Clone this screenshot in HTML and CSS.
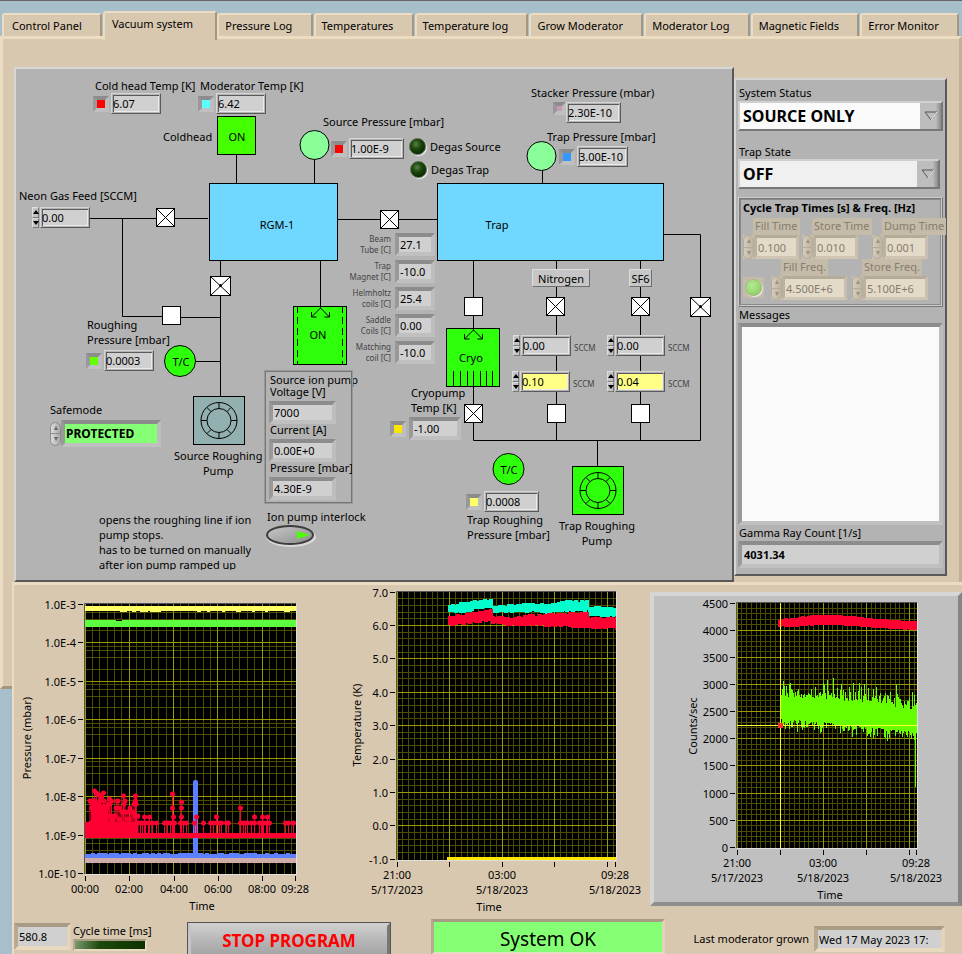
FILE: index.html
```html
<!DOCTYPE html>
<html lang="en">
<head>
  <meta charset="UTF-8" />
  <meta name="viewport" content="width=device-width, initial-scale=1.0"/>
  <title>Vacuum system</title>
  <link rel="stylesheet" href="styles.css">
</head>
<body>
  <nav class="tabs" role="tablist">
    <button type="button" role="tab" class="tab">Control Panel</button>
    <button type="button" role="tab" class="tab active" aria-selected="true">Vacuum system</button>
    <button type="button" role="tab" class="tab">Pressure Log</button>
    <button type="button" role="tab" class="tab">Temperatures</button>
    <button type="button" role="tab" class="tab">Temperature log</button>
    <button type="button" role="tab" class="tab">Grow Moderator</button>
    <button type="button" role="tab" class="tab">Moderator Log</button>
    <button type="button" role="tab" class="tab">Magnetic Fields</button>
    <button type="button" role="tab" class="tab">Error Monitor</button>
  </nav>

  <main class="page">
    <section class="diagram">
      <svg class="pipes" viewBox="16 69 716 511" width="716" height="511">
        <defs>
          <g id="open">
            <rect x="-9" y="-9" width="18" height="18" fill="#fff" stroke="#000"/>
          </g>
          <g id="closed">
            <rect x="-9" y="-9" width="18" height="18" fill="#fff" stroke="#000"/>
            <path d="M-9 -9L9 9M9 -9L-9 9" stroke="#000"/>
          </g>
          <g id="gate">
            <rect x="-10" y="-9" width="20" height="19" fill="#fff" stroke="#000"/>
            <path d="M-10 -9L10 10M10 -9L-10 10" stroke="#000"/>
            <circle r="1.500"/>
          </g>
          <g id="turbo" fill="none" stroke="#000">
            <circle r="18"/>
            <circle r="12"/>
            <path d="M0 -18V-12M0 12V18M-18 0H-12M12 0H18M-12 -13L-8 -9M12 -13L8 -9M-12 13L-8 9M12 13L8 9"/>
          </g>
          <g id="inlet" fill="none" stroke="#000">
            <path d="M0 0V1L-9 10M0 1L9 10M-9 5V10H-4M9 5V10H4"/>
          </g>
        </defs>

        <g fill="none" stroke="#000">
          <path d="M236.500 155V183M314.500 159V183M542.500 170V183"/>
          <path d="M88 218.500H208M122.500 218V316.500H162M181 317.500H220"/>
          <path d="M220.500 261V396M196 361.500H220"/>
          <path d="M338 219.500H437M320.500 261V306"/>
          <path d="M664 234.500H700.500V440.500H473.500V261M556.500 261V440M640.500 261V440M597.500 440V466"/>
        </g>

        <g stroke="#000">
          <rect x="217.500" y="116.500" width="38" height="38" fill="#44ff00"/>
          <rect x="209.500" y="183.500" width="128" height="77" fill="#70d8ff"/>
          <rect x="437.500" y="183.500" width="226" height="77" fill="#70d8ff"/>
          <circle cx="314.500" cy="145" r="14.500" fill="#8aff99"/>
          <circle cx="541.500" cy="156" r="14.500" fill="#8aff99"/>
          <circle cx="180" cy="361" r="15.500" fill="#2eff0a"/>
          <circle cx="508.500" cy="469" r="15.500" fill="#2eff0a"/>
          <rect x="293.500" y="306.500" width="53" height="58" fill="#2eff0a"/>
          <path d="M297.500 306V365M342.500 306V365" stroke-dasharray="7 4"/>
          <rect x="446.500" y="328.500" width="53" height="58" fill="#2eff0a"/>
          <path d="M453.500 371V387M460.500 371V387M467.500 371V387M473.500 371V387M480.500 371V387M486.500 371V387M492.500 371V387"/>
          <rect x="193.500" y="396.500" width="51" height="48" fill="#92b0b0"/>
          <rect x="572.500" y="466.500" width="51" height="48" fill="#2eff0a"/>
        </g>

        <use href="#inlet" x="320.500" y="307"/>
        <use href="#inlet" x="473.500" y="329"/>
        <use href="#turbo" x="219" y="420.500"/>
        <use href="#turbo" x="598" y="490.500"/>

        <use href="#closed" x="165.500" y="217.500"/>
        <use href="#closed" x="389.500" y="219.500"/>
        <use href="#gate" x="220.500" y="285.500"/>
        <use href="#open" x="171.500" y="315.500"/>
        <use href="#open" x="473.500" y="306.500"/>
        <use href="#closed" x="555.500" y="306.500"/>
        <use href="#closed" x="640.500" y="306.500"/>
        <use href="#gate" x="700.500" y="306.500"/>
        <use href="#closed" x="473.500" y="413.500"/>
        <use href="#open" x="556.500" y="413.500"/>
        <use href="#open" x="640.500" y="413.500"/>

        <g class="block-text">
          <text x="237" y="141">ON</text>
          <text x="277" y="229">RGM-1</text>
          <text x="497" y="229">Trap</text>
          <text x="318" y="339">ON</text>
          <text x="471" y="362">Cryo</text>
          <text x="181" y="366">T/C</text>
          <text x="509" y="474">T/C</text>
        </g>
      </svg>

      <!-- source side -->
      <label class="node coldhead-label" for="coldhead-temp">Cold head Temp [K]</label>
      <div class="node gauge coldhead-gauge">
        <i class="led red"></i><input class="num" id="coldhead-temp" value="6.07" readonly>
      </div>
      <label class="node moderator-label" for="moderator-temp">Moderator Temp [K]</label>
      <div class="node gauge moderator-gauge">
        <i class="led cyan"></i><input class="num" id="moderator-temp" value="6.42" readonly>
      </div>
      <span class="node coldhead-name">Coldhead</span>

      <label class="node source-label" for="source-pressure">Source Pressure [mbar]</label>
      <div class="node gauge source-gauge">
        <i class="led red"></i><input class="num wide" id="source-pressure" value="1.00E-9" readonly>
      </div>
      <button type="button" class="node degas degas-source"><i class="lamp"></i>Degas Source</button>
      <button type="button" class="node degas degas-trap"><i class="lamp"></i>Degas Trap</button>

      <label class="node neon-label" for="neon-feed">Neon Gas Feed [SCCM]</label>
      <div class="node gauge neon-gauge">
        <span class="step"><button type="button" aria-label="Increase"></button><button type="button" class="down" aria-label="Decrease"></button></span>
        <input class="num" id="neon-feed" value="0.00">
      </div>

      <label class="node roughing-label" for="roughing-pressure">Roughing<br>Pressure [mbar]</label>
      <div class="node gauge roughing-gauge">
        <i class="led green"></i><input class="num" id="roughing-pressure" value="0.0003" readonly>
      </div>

      <label class="node safemode-label" for="safemode">Safemode</label>
      <div class="node gauge safemode-gauge">
        <span class="spin"><button type="button" aria-label="Previous"></button><button type="button" class="down" aria-label="Next"></button></span>
        <input class="well protected" id="safemode" value="PROTECTED" readonly>
      </div>

      <span class="node center source-pump-name">Source Roughing<br>Pump</span>

      <div class="node ion-pump">
        <span>Source ion pump</span>
        <label for="ion-voltage">Voltage [V]</label>
        <input class="well" id="ion-voltage" value="7000" readonly>
        <label for="ion-current">Current [A]</label>
        <input class="well" id="ion-current" value="0.00E+0" readonly>
        <label for="ion-pressure">Pressure [mbar]</label>
        <input class="well" id="ion-pressure" value="4.30E-9" readonly>
      </div>

      <p class="node note">opens the roughing line if ion<br>pump stops.<br>has to be turned on manually<br>after ion pump ramped up</p>
      <label class="node interlock-label" for="interlock">Ion pump interlock</label>
      <button type="button" class="node interlock" id="interlock">
        <svg width="50" height="22" viewBox="0 0 50 22">
          <defs>
            <linearGradient id="pill" x1="0" y1="0" x2="1" y2="1">
              <stop offset="0" stop-color="#c8c8c8"/><stop offset="1" stop-color="#8c8c8c"/>
            </linearGradient>
          </defs>
          <ellipse cx="25" cy="12" rx="25" ry="10" fill="#d8d8d8"/>
          <ellipse cx="24" cy="10" rx="23" ry="9" fill="url(#pill)" stroke="#3c3c3c" stroke-width="2"/>
          <path d="M31 6L44 10L31 14Z" fill="#4cff00"/>
        </svg>
      </button>

      <!-- magnet temperatures -->
      <div class="node coils">
        <label for="beam">Beam<br>Tube [C]</label><input class="well" id="beam" value="27.1" readonly>
        <label for="magnet">Trap<br>Magnet [C]</label><input class="well" id="magnet" value="-10.0" readonly>
        <label for="helmholtz">Helmholtz<br>coils [C]</label><input class="well" id="helmholtz" value="25.4" readonly>
        <label for="saddle">Saddle<br>Coils [C]</label><input class="well" id="saddle" value="0.00" readonly>
        <label for="matching">Matching<br>coil [C]</label><input class="well" id="matching" value="-10.0" readonly>
      </div>

      <!-- trap side -->
      <label class="node stacker-label" for="stacker-pressure">Stacker Pressure (mbar)</label>
      <div class="node gauge stacker-gauge">
        <i class="led small mauve"></i><input class="num wide" id="stacker-pressure" value="2.30E-10" readonly>
      </div>
      <label class="node trap-label" for="trap-pressure">Trap Pressure [mbar]</label>
      <div class="node gauge trap-gauge">
        <i class="led blue"></i><input class="num" id="trap-pressure" value="3.00E-10" readonly>
      </div>

      <button type="button" class="node gas nitrogen">Nitrogen</button>
      <button type="button" class="node gas sf6">SF6</button>
      <div class="node flow-set n2-flow">
        <span class="step"><button type="button" aria-label="Increase"></button><button type="button" class="down" aria-label="Decrease"></button></span>
        <input class="num" id="n2-set" value="0.00"><label for="n2-set">SCCM</label>
      </div>
      <div class="node flow-set n2-read">
        <span class="step"><button type="button" aria-label="Increase"></button><button type="button" class="down" aria-label="Decrease"></button></span>
        <input class="num yellow" id="n2-value" value="0.10"><label for="n2-value">SCCM</label>
      </div>
      <div class="node flow-set sf6-flow">
        <span class="step"><button type="button" aria-label="Increase"></button><button type="button" class="down" aria-label="Decrease"></button></span>
        <input class="num" id="sf6-set" value="0.00"><label for="sf6-set">SCCM</label>
      </div>
      <div class="node flow-set sf6-read">
        <span class="step"><button type="button" aria-label="Increase"></button><button type="button" class="down" aria-label="Decrease"></button></span>
        <input class="num yellow" id="sf6-value" value="0.04"><label for="sf6-value">SCCM</label>
      </div>

      <label class="node cryo-label" for="cryo-temp">Cryopump<br>Temp [K]</label>
      <div class="node gauge cryo-gauge">
        <i class="led gold"></i><input class="well" id="cryo-temp" value="-1.00" readonly>
      </div>
      <div class="node gauge trap-rough-gauge">
        <i class="led lemon"></i><input class="num wide" id="trap-roughing" value="0.0008" readonly>
      </div>
      <label class="node trap-rough-label" for="trap-roughing">Trap Roughing<br>Pressure [mbar]</label>
      <span class="node center trap-pump-name">Trap Roughing<br>Pump</span>
    </section>

    <aside class="status">
      <label for="system-status">System Status</label>
      <div class="ring">
        <select id="system-status"><option>SOURCE ONLY</option></select>
        <span class="arrow"><svg width="14" height="10" viewBox="0 0 14 10"><path d="M1 1H13L7 9Z" fill="none" stroke="#555"/><path d="M7 9L13 1" stroke="#f4f4f4"/></svg></span>
      </div>
      <label class="gap" for="trap-state">Trap State</label>
      <div class="ring short">
        <select id="trap-state"><option>OFF</option></select>
        <span class="arrow"><svg width="14" height="10" viewBox="0 0 14 10"><path d="M1 1H13L7 9Z" fill="none" stroke="#555"/><path d="M7 9L13 1" stroke="#f4f4f4"/></svg></span>
      </div>

      <fieldset class="cycle" disabled>
        <strong>Cycle Trap Times [s] &amp; Freq. [Hz]</strong>
        <div class="cycle-row">
          <div class="field">
            <label for="fill-time">Fill Time</label>
            <div class="dim"><span class="spin"><button type="button" aria-label="Increase"></button><button type="button" class="down" aria-label="Decrease"></button></span><input class="well" id="fill-time" value="0.100"></div>
          </div>
          <div class="field">
            <label for="store-time">Store Time</label>
            <div class="dim"><span class="spin"><button type="button" aria-label="Increase"></button><button type="button" class="down" aria-label="Decrease"></button></span><input class="well" id="store-time" value="0.010"></div>
          </div>
          <div class="field dump">
            <label for="dump-time">Dump Time</label>
            <div class="dim"><span class="spin"><button type="button" aria-label="Increase"></button><button type="button" class="down" aria-label="Decrease"></button></span><input class="well" id="dump-time" value="0.001"></div>
          </div>
        </div>
        <div class="cycle-row second">
          <span class="lamp-box"><i class="lamp lit"></i></span>
          <div class="field freq">
            <label for="fill-freq">Fill Freq.</label>
            <div class="dim"><span class="spin"><button type="button" aria-label="Increase"></button><button type="button" class="down" aria-label="Decrease"></button></span><input class="well" id="fill-freq" value="4.500E+6"></div>
          </div>
          <div class="field freq">
            <label for="store-freq">Store Freq.</label>
            <div class="dim"><span class="spin"><button type="button" aria-label="Increase"></button><button type="button" class="down" aria-label="Decrease"></button></span><input class="well" id="store-freq" value="5.100E+6"></div>
          </div>
        </div>
      </fieldset>

      <label for="messages">Messages</label>
      <textarea class="messages" id="messages" readonly></textarea>
      <label for="gamma">Gamma Ray Count [1/s]</label>
      <input class="well gamma" id="gamma" value="4031.34" readonly>
    </aside>
  </main>

  <div class="lower">
    <div class="page-edge"></div>
    <section class="logs">
      <div class="charts">
        <svg id="pressure-chart" class="chart" width="324" height="332" viewBox="14 585 324 332"></svg>
        <svg id="temperature-chart" class="chart" width="312" height="332" viewBox="338 585 312 332"></svg>
        <div class="count-panel">
          <svg id="count-chart" class="chart" width="304" height="305" viewBox="654 596 304 305"></svg>
        </div>
      </div>
      <footer class="bar">
        <input class="well sand cycle-ms" id="cycle-ms" value="580.8" readonly>
        <div class="cycle-time">
          <label for="cycle-ms">Cycle time [ms]</label>
          <div class="lamp-bar"></div>
        </div>
        <button type="button" class="stop">STOP PROGRAM</button>
        <output class="ok">System OK</output>
        <label class="grown-label" for="grown">Last moderator grown</label>
        <input class="well sand grown" id="grown" value="Wed 17 May 2023 17:" readonly>
      </footer>
    </section>
  </div>

  <script src="charts.js"></script>
</body>
</html>
```

FILE: styles.css
```css
* {
  box-sizing: border-box;
}
body {
  margin: 0;
  min-height: 100vh;
  padding-top: 10px;
  border-top: 1px solid #666;
  background: #a7bfcb;
  color: #000;
  font-family: "Noto Sans", "Open Sans", sans-serif;
  font-size: 11px;
  line-height: 15px;
  overflow: hidden;
}
button, input, select, textarea {
  font: inherit;
  color: inherit;
  margin: 0;
  padding: 0;
  border: none;
  border-radius: 0;
  background: none;
}
button {
  cursor: pointer;
}

/* tabs */
.tabs {
  display: flex;
  align-items: flex-end;
  padding: 0 2px;
  position: relative;
  z-index: 1;
}
.tab {
  flex: 1 1 auto;
  height: 23px;
  padding: 0 14px 0 6px;
  margin-right: 1px;
  text-align: left;
  white-space: nowrap;
  background: #d8c8b0;
  border: 2px solid;
  border-color: #ecdcc2 #a39781 #d8c8b0 #ecdcc2;
  border-bottom: none;
  border-radius: 3px 3px 0 0;
}
.tab:first-child {
  padding-left: 8px;
}
.tab.active {
  height: 29px;
  margin-right: 0;
  margin-bottom: -4px;
  padding: 0 18px 6px 7px;
}

/* tab page */
.page {
  display: flex;
  align-items: flex-start;
  padding: 28px 12px 0 11px;
  background: #d8c8b0;
  border: 3px solid;
  border-color: #ecdcc2 #c0b096 #d8c8b0 #ecdcc2;
  border-bottom: none;
}
.diagram {
  flex: 1 0 720px;
  position: relative;
  height: 515px;
  background: #b3b3b3;
  border: 2px solid;
  border-color: #d6d6d6 #595959 #595959 #d6d6d6;
}
.pipes {
  display: block;
}
.block-text {
  text-anchor: middle;
}
.node {
  position: absolute;
  white-space: nowrap;
}
.center {
  text-align: center;
}
.gauge {
  display: flex;
  align-items: center;
  gap: 2px;
}

/* numeric boxes */
.num {
  width: 50px;
  height: 21px;
  padding: 0 1px;
  background: #d0d0d0;
  border: 1px solid;
  border-color: #d6d6d6 #5a5a5a #5a5a5a #d6d6d6;
  box-shadow: inset 0 0 0 1px #b3b3b3, inset 2px 2px 0 #5a5a5a, inset -2px -2px 0 #ebebeb;
}
.num.wide {
  width: 55px;
}
.num.yellow {
  background: #ffff85;
}
.well {
  width: 100%;
  height: 23px;
  padding: 0 1px;
  background: #d0d0d0;
  border: 4px solid;
  border-color: #8c8c8c #bdbdbd #c0c0c0 #999;
}
.well.sand {
  border-color: #a99c84 #e2d3ba #e8d9c0 #b8aa91;
}

/* indicator squares */
.led {
  width: 16px;
  height: 16px;
  flex: none;
  border: 4px solid;
  border-color: #8c8c8c #bdbdbd #c0c0c0 #999;
}
.led.small {
  width: 13px;
  height: 13px;
  align-self: flex-start;
}
.red { background: #ff0000; }
.cyan { background: #5cffff; }
.green { background: #66ff00; }
.mauve { background: #c79bb7; }
.blue { background: #3399ff; }
.gold { background: #ffe600; }
.lemon { background: #ffff66; }

/* up / down buttons */
.step {
  display: flex;
  flex-direction: column;
  width: 7px;
  height: 21px;
  flex: none;
}
.step button {
  flex: 1;
  display: flex;
  align-items: center;
  justify-content: center;
  background: #c4c4c4;
  border: 1px solid;
  border-color: #dedede #777 #777 #dedede;
}
.step button::after {
  content: "";
  border: 3px solid transparent;
  border-top: none;
  border-bottom: 4px solid #000;
}
.step .down::after {
  transform: rotate(180deg);
}
.spin {
  display: flex;
  flex-direction: column;
  flex: none;
  width: 11px;
  height: 24px;
  border: 1px solid #8c8c8c;
  border-radius: 6px;
  background: linear-gradient(90deg, #dcdcdc, #a8a8a8);
  overflow: hidden;
}
.spin button {
  flex: 1;
  display: flex;
  align-items: center;
  justify-content: center;
}
.spin .down {
  border-top: 1px solid #8c8c8c;
}
.spin button::after {
  content: "";
  border: 2px solid transparent;
  border-top: none;
  border-bottom: 4px solid #666;
}
.spin .down::after {
  transform: rotate(180deg);
}

/* round lamps */
.lamp {
  display: block;
  flex: none;
  width: 17px;
  height: 17px;
  border-radius: 50%;
  background: radial-gradient(circle at 40% 35%, #5b8050, #1c4a0c 35%, #0a2800 75%);
  border: 1px solid #5a6a50;
  box-shadow: 1px 1px 1px #f0f0f0;
}
.lamp.lit {
  background: radial-gradient(circle at 40% 35%, #b4ea94, #98d66e 60%, #86bc62);
  border-color: #a5b985;
}
.degas {
  display: flex;
  align-items: center;
  gap: 4px;
}

/* diagram positions */
.coldhead-label { left: 79px; top: 9px; }
.coldhead-gauge { left: 77px; top: 24px; }
.moderator-label { left: 184px; top: 9px; }
.moderator-gauge { left: 182px; top: 24px; }
.coldhead-name { left: 147px; top: 60px; }
.source-label { left: 307px; top: 45px; }
.source-gauge { left: 315px; top: 69px; }
.degas-source { left: 393px; top: 69px; }
.degas-trap { left: 394px; top: 92px; }
.neon-label { left: 3px; top: 119px; }
.neon-gauge { left: 16px; top: 138px; gap: 1px; }
.roughing-label { left: 71px; top: 248px; }
.roughing-gauge { left: 70px; top: 281px; }
.safemode-label { left: 34px; top: 333px; }
.safemode-gauge { left: 34px; top: 351px; gap: 0; }
.source-pump-name { left: 158px; top: 379px; }
.note { left: 83px; top: 443px; margin: 0; height: 58px; overflow: hidden; }
.interlock-label { left: 251px; top: 440px; }
.interlock { left: 250px; top: 456px; height: 22px; }
.stacker-label { left: 515px; top: 16px; }
.stacker-gauge { left: 537px; top: 33px; gap: 0; }
.trap-label { left: 531px; top: 60px; }
.trap-gauge { left: 543px; top: 77px; }
.nitrogen { left: 516px; top: 200px; width: 58px; }
.sf6 { left: 613px; top: 200px; width: 23px; }
.n2-flow { left: 497px; top: 266px; }
.n2-read { left: 496px; top: 302px; }
.sf6-flow { left: 591px; top: 266px; }
.sf6-read { left: 591px; top: 302px; }
.cryo-label { left: 395px; top: 316px; }
.cryo-gauge { left: 374px; top: 348px; width: 71px; gap: 3px; }
.trap-rough-gauge { left: 450px; top: 422px; }
.trap-rough-label { left: 451px; top: 443px; }
.trap-pump-name { left: 543px; top: 449px; }

.trap-gauge .num {
  width: 51px;
}
.protected {
  width: 100px;
  height: 27px;
  background: #85ff73;
  font-size: 12px;
  font-weight: bold;
}
.ion-pump {
  left: 248px;
  top: 301px;
  width: 89px;
  height: 134px;
  padding: 2px 15px 0 3px;
  display: flex;
  flex-direction: column;
  line-height: 12px;
  border: 2px groove #ccc;
  border-color: #777 #c8c8c8 #c8c8c8 #777;
  outline: 1px solid #999;
  outline-offset: -1px;
}
.ion-pump span {
  padding-left: 1px;
}
.ion-pump label {
  padding: 0 0 3px 1px;
}
.ion-pump .well {
  flex: none;
}
.coils {
  left: 332px;
  top: 164px;
  display: grid;
  grid-template-columns: 43px 40px;
  column-gap: 4px;
  row-gap: 4px;
  font-size: 8px;
  line-height: 11px;
  text-align: right;
  color: #444;
}
.coils .well {
  font-size: 11px;
  color: #000;
}
.gas {
  height: 18px;
  background: #c6c6c6;
  border: 1px solid;
  border-color: #dedede #6e6e6e #6e6e6e #dedede;
}
.flow-set {
  display: flex;
  align-items: center;
  gap: 1px;
}
.flow-set label {
  padding: 4px 0 0 2px;
  font-size: 8px;
  line-height: 11px;
  color: #444;
}

/* status panel */
.status {
  flex: 0 0 213px;
  display: flex;
  flex-direction: column;
  height: 498px;
  margin-top: 11px;
  padding: 5px 2px 0 2px;
  background: #b3b3b3;
  border: 2px solid;
  border-color: #d6d6d6 #595959 #595959 #d6d6d6;
}
.status > label {
  padding-left: 1px;
}
.status > .gap {
  margin-top: 13px;
}
.ring {
  position: relative;
  height: 30px;
  border: 2px solid;
  border-color: #d0d0d0 #777 #777 #d0d0d0;
  margin-top: 1px;
}
.ring.short {
  margin: 0 3px 0 0;
}
.ring select {
  width: 100%;
  height: 100%;
  padding: 0 0 0 3px;
  appearance: none;
  background: #fafafa;
  font-size: 16px;
  font-weight: bold;
}
.ring.short select {
  background: #f0f0f0;
}
.arrow {
  position: absolute;
  top: 0;
  right: 0;
  bottom: 0;
  width: 21px;
  display: flex;
  align-items: center;
  justify-content: center;
  background: linear-gradient(90deg, #bdbdbd 75%, #8a8a8a);
  pointer-events: none;
}
.cycle {
  margin: 8px 0 0;
  padding: 1px 0 0 3px;
  height: 110px;
  min-width: 0;
  border: 2px ridge #ccc;
  box-shadow: inset 0 0 0 1px #8a8a8a;
}
.cycle strong {
  display: block;
  height: 18px;
}
.cycle-row {
  display: flex;
  gap: 3px;
  width: 196px;
}
.field {
  flex: 0 0 56px;
  min-width: 0;
  color: #857d70;
}
.field.dump {
  margin-left: 11px;
}
.field label {
  display: inline-block;
  height: 17px;
  margin-left: 10px;
  padding: 0 2px;
  white-space: nowrap;
  background: #c5bba9;
}
.dim {
  display: flex;
  height: 24px;
  background: #c9bfae;
}
.dim .spin {
  border-color: #b5ab9a;
  background: linear-gradient(90deg, #d6ccba, #bdb3a2);
}
.dim .spin .down {
  border-color: #b5ab9a;
}
.dim .spin button::after {
  border-bottom-color: #9b9283;
}
.dim .well {
  min-width: 0;
  height: 24px;
  background: #e3dac8;
  border-width: 3px;
  border-color: #b5ab99 #c9bfae #cfc5b2 #bbb19f;
}
.second {
  gap: 5px;
}
.field.freq {
  flex: 0 0 76px;
}
.lamp-box {
  flex: 0 0 21px;
  height: 21px;
  margin: 18px 2px 0 0;
  padding: 2px;
  background: #c5bba9;
}
.messages {
  height: 202px;
  margin-top: 1px;
  resize: none;
  background: #fafafa;
  border: 4px solid;
  border-color: #8c8c8c #bdbdbd #c0c0c0 #999;
}
.gamma {
  height: 27px;
  margin-top: 1px;
  padding: 0 2px;
  font-weight: bold;
}

/* logs */
.lower {
  display: flex;
  align-items: flex-start;
}
.page-edge {
  flex: 0 0 12px;
  height: 107px;
  background: #d8c8b0;
  border-left: 3px solid #ecdcc2;
  border-bottom: 3px solid #a39781;
}
.logs {
  flex: 1;
  background: #d8c8b0;
  border-top: 3px solid #ecdcc2;
  border-left: 2px solid #ecdcc2;
}
.charts {
  display: flex;
}
.chart {
  display: block;
  flex: none;
}
.chart text {
  fill: #000;
}
.count-panel {
  flex: 1;
  height: 314px;
  margin-top: 7px;
  background: #c0c0c0;
  border: 4px solid;
  border-color: #d6d6d6 #858585 #8f8f8f #d6d6d6;
}
.bar {
  display: flex;
  align-items: flex-start;
  height: 40px;
  padding-right: 17px;
}
.cycle-ms {
  flex: 0 0 57px;
  width: 57px;
  height: 27px;
  margin-top: 6px;
}
.cycle-time {
  flex: 0 0 110px;
  margin: 6px 4px 0 2px;
}
.lamp-bar {
  width: 74px;
  height: 12px;
  margin-top: 1px;
  background: linear-gradient(100deg, #7c9a70, #1d4a0c 35%, #0c3000);
  border: 2px solid;
  border-color: #a99c84 #e8d9c0 #e8d9c0 #b8aa91;
}
.stop {
  flex: 0 0 204px;
  height: 36px;
  margin-top: 5px;
  color: #ff0000;
  font-size: 17px;
  font-weight: bold;
  background: linear-gradient(#cdcdcd, #bbb 40%, #a5a5a5);
  border: 4px solid;
  border-color: #cfcfcf #777 #888 #c4c4c4;
  outline: 1px solid #555;
  outline-offset: -1px;
}
.ok {
  flex: 0 0 234px;
  height: 36px;
  margin: 2px 0 0 40px;
  padding-top: 7px;
  text-align: center;
  font-size: 19px;
  line-height: 20px;
  background: #85ff73;
  border: 3px solid;
  border-color: #a99c84 #e2d3ba #e8d9c0 #b8aa91;
}
.grown-label {
  margin: 14px 5px 0 auto;
}
.grown {
  flex: 0 0 131px;
  width: 131px;
  height: 26px;
  margin-top: 9px;
}
```

FILE: charts.js
```javascript
const NS = 'http://www.w3.org/2000/svg';
const MAJOR = '#999900';
const MINOR = '#4d4d00';

// small seeded generator so the traces are the same on every load
let seed = 7;
function rnd() {
  seed = (seed * 16807) % 2147483647;
  return seed / 2147483647;
}

function add(svg, tag, attrs, text) {
  const el = document.createElementNS(NS, tag);
  for (const key in attrs) el.setAttribute(key, attrs[key]);
  if (text) el.textContent = text;
  svg.appendChild(el);
}

function line(svg, x1, y1, x2, y2, stroke, width = 1) {
  add(svg, 'path', { d: `M${x1} ${y1}L${x2} ${y2}`, stroke, 'stroke-width': width, fill: 'none' });
}

function px(v) {
  return Math.floor(v) + 0.5;
}

function frame(svg, c) {
  const right = c.x + c.w;
  const bottom = c.y + c.h;
  add(svg, 'rect', { x: c.x, y: c.y, width: c.w, height: c.h, fill: '#000' });

  for (let i = 1; i * c.minorX < c.w; i++) {
    line(svg, px(c.x + i * c.minorX), c.y, px(c.x + i * c.minorX), bottom, MINOR);
  }
  c.yLabels.forEach((label, i) => {
    if (i === c.yLabels.length - 1) return;
    c.minorY.forEach(f => {
      const y = px(c.y + (i + f) * c.stepY);
      line(svg, c.x, y, right, y, MINOR);
    });
  });
  for (let x = c.x; x < right; x += c.stepX) line(svg, px(x), c.y, px(x), bottom, MAJOR);

  c.yLabels.forEach((label, i) => {
    const y = px(c.y + i * c.stepY);
    if (i > 0 && i < c.yLabels.length - 1) line(svg, c.x, y, right, y, MAJOR);
    line(svg, c.x - 7, y, c.x - 2, y, '#000');
    add(svg, 'text', { x: c.x - 9, y: y + 4, 'text-anchor': 'end' }, label);
  });

  c.ticks.forEach(x => line(svg, px(x), bottom + 2, px(x), bottom + 7, '#000'));
  c.xLabels.forEach(([x, time, date]) => {
    add(svg, 'text', { x, y: bottom + 19, 'text-anchor': 'middle' }, time);
    if (date) add(svg, 'text', { x, y: bottom + 34, 'text-anchor': 'middle' }, date);
  });
  add(svg, 'text', { x: c.title[0], y: c.title[1], 'text-anchor': 'middle' }, 'Time');
  add(svg, 'text', {
    x: 0, y: 0, 'text-anchor': 'middle',
    transform: `translate(${c.side[0]} ${c.side[1]}) rotate(-90)`
  }, c.name);
}

function edges(svg, c) {
  add(svg, 'path', { d: `M${c.x - 0.5} ${c.y + c.h}V${c.y - 0.5}H${c.x + c.w}`, stroke: '#555', fill: 'none' });
  add(svg, 'path', { d: `M${c.x} ${c.y + c.h + 0.5}H${c.x + c.w + 0.5}V${c.y}`, stroke: '#e0e0e0', fill: 'none' });
}

// thick noisy trace through [x, centre, thickness] points
function band(svg, points, color, right, noise) {
  let d = '';
  for (let i = 0; i < points.length - 1; i++) {
    const [x1, y1, t1] = points[i];
    const [x2, y2, t2] = points[i + 1];
    for (let x = x1; x < x2; x += 3) {
      const f = (x - x1) / (x2 - x1);
      const y = y1 + (y2 - y1) * f;
      const t = (t1 + (t2 - t1) * f) / 2;
      const top = Math.round(y - t - rnd() * noise);
      const bottom = Math.round(y + t + rnd() * noise);
      d += `M${x} ${top}H${Math.min(x + 4, right)}V${bottom}H${x}Z`;
    }
  }
  add(svg, 'path', { d, fill: color });
}

function pressureChart() {
  const svg = document.getElementById('pressure-chart');
  const c = {
    x: 85, y: 604, w: 211, h: 270, stepX: 44.3, minorX: 7.38, stepY: 38.5,
    minorY: [0.1, 0.22, 0.4, 0.7],
    yLabels: ['1.0E-3', '1.0E-4', '1.0E-5', '1.0E-6', '1.0E-7', '1.0E-8', '1.0E-9', '1.0E-10'],
    ticks: [85, 129, 174, 218, 262, 295],
    xLabels: [[85, '00:00'], [129, '02:00'], [174, '04:00'], [218, '06:00'], [262, '08:00'], [295, '09:28']],
    title: [202, 910], side: [31, 738], name: 'Pressure (mbar)'
  };
  frame(svg, c);
  add(svg, 'rect', { x: 85, y: 606, width: 211, height: 5, fill: '#ffff66' });
  [[120, 7], [132, 4], [140, 8], [150, 11], [197, 4], [207, 3], [222, 3], [236, 5], [252, 3], [265, 3], [284, 6]].forEach(([x, w]) => {
    add(svg, 'rect', { x, y: 611, width: w, height: 1, fill: '#ffff66' });
  });
  add(svg, 'rect', { x: 85, y: 620, width: 211, height: 7, fill: '#5cff40' });
  add(svg, 'rect', { x: 116, y: 620, width: 6, height: 1, fill: '#000' });
  band(svg, [[85, 856, 4], [296, 856, 4]], '#5c80ff', 296, 1);
  add(svg, 'rect', { x: 85, y: 858, width: 211, height: 5, fill: '#d0aca8' });
  add(svg, 'rect', { x: 193, y: 780, width: 5, height: 76, rx: 2, fill: '#5c80ff' });

  const red = '#ff0033';
  const stem = (x, y) => {
    line(svg, x, y, x, 836, red);
    add(svg, 'circle', { cx: x, cy: y, r: 2.5, fill: red });
  };
  add(svg, 'rect', { x: 85, y: 833, width: 211, height: 5, fill: red });
  add(svg, 'rect', { x: 85, y: 822, width: 53, height: 12, fill: red });
  const levels = [823, 819, 816, 812, 808, 804, 801];
  for (let x = 90; x < 139; x += 1) {
    stem(x, levels[Math.floor(rnd() * (x > 112 && x < 116 ? 3 : 7))]);
  }
  add(svg, 'rect', { x: 92, y: 804, width: 16, height: 20, fill: red });
  [[94, 791], [96, 793], [99, 795], [103, 793], [100, 797], [109, 799], [111, 801], [123, 796], [135, 796], [135, 801],
   [91, 808], [91, 802], [144, 817], [149, 817], [172, 794], [172, 808], [173, 817], [181, 802], [181, 808], [181, 817],
   [196, 817], [216, 817], [240, 808], [254, 817], [262, 817], [267, 817]].forEach(([x, y]) => stem(x + 0.5, y));
  [140, 142, 145, 148, 152, 156, 164, 167, 170, 174, 180, 183, 186, 194, 203, 210, 213, 216, 219, 221, 226, 228,
   240, 243, 245, 247, 251, 254, 259, 261, 263, 266, 269, 285, 288, 293].forEach(x => stem(x + 0.5, 823));
  edges(svg, c);
}

function temperatureChart() {
  const svg = document.getElementById('temperature-chart');
  const c = {
    x: 397, y: 592, w: 219, h: 268, stepX: 52.6, minorX: 5.844, stepY: 33.4,
    minorY: [0.2, 0.4, 0.6, 0.8],
    yLabels: ['7.0', '6.0', '5.0', '4.0', '3.0', '2.0', '1.0', '0.0', '-1.0'],
    ticks: [397, 449, 502, 554, 607, 615],
    xLabels: [[397, '21:00', '5/17/2023'], [502, '03:00', '5/18/2023'], [615, '09:28', '5/18/2023']],
    title: [489, 911], side: [361, 725], name: 'Temperature (K)'
  };
  frame(svg, c);
  band(svg, [[448, 609, 5], [456, 608, 7], [470, 606, 8], [480, 604, 7], [489, 604, 7], [492, 609, 5], [510, 609, 6],
    [528, 607, 8], [545, 609, 6], [562, 606, 8], [585, 606, 8], [588, 611, 7], [616, 612, 8]], '#00ffcc', 616, 2);
  band(svg, [[448, 621, 6], [456, 620, 8], [475, 617, 9], [489, 615, 9], [491, 620, 6], [508, 621, 6],
    [528, 620, 8], [538, 620, 8], [550, 620, 12], [585, 620, 13], [588, 623, 10], [616, 623, 10]], '#ff0033', 616, 2);
  add(svg, 'rect', { x: 447, y: 857, width: 169, height: 3, fill: '#ffe600' });
  edges(svg, c);
}

function countChart() {
  const svg = document.getElementById('count-chart');
  const c = {
    x: 737, y: 603, w: 180, h: 245, stepX: 43.1, minorX: 4.79, stepY: 27.15,
    minorY: [0.2, 0.4, 0.6, 0.8],
    yLabels: ['4500', '4000', '3500', '3000', '2500', '2000', '1500', '1000', '500', '0'],
    ticks: [737, 780, 823, 866, 909, 916],
    xLabels: [[737, '21:00', '5/17/2023'], [823, '03:00', '5/18/2023'], [916, '09:28', '5/18/2023']],
    title: [830, 899], side: [697, 726], name: 'Counts/sec'
  };
  frame(svg, c);
  band(svg, [[778, 623, 6], [795, 622, 8], [818, 620, 9], [835, 620, 9], [860, 622, 8], [885, 624, 8], [916, 626, 8]], '#ff0033', 917, 1);
  let d = '';
  for (let x = 781; x < 917; x++) {
    const f = (x - 781) / 136;
    const top = Math.round(695 + 14 * f * f - rnd() * rnd() * 24 + rnd() * 3);
    const bottom = Math.round(718 + 14 * f + rnd() * rnd() * 14);
    d += `M${x} ${top}h1V${bottom}h-1Z`;
  }
  d += 'M915 720h1V787h-1Z';
  add(svg, 'path', { d, fill: '#66ff00' });
  line(svg, 780.5, 603, 780.5, 848, '#ffff00');
  line(svg, 737, 725.5, 917, 725.5, '#ffff33');
  add(svg, 'rect', { x: 778, y: 723, width: 5, height: 5, fill: '#ff3333' });
  edges(svg, c);
}

pressureChart();
temperatureChart();
countChart();
```
